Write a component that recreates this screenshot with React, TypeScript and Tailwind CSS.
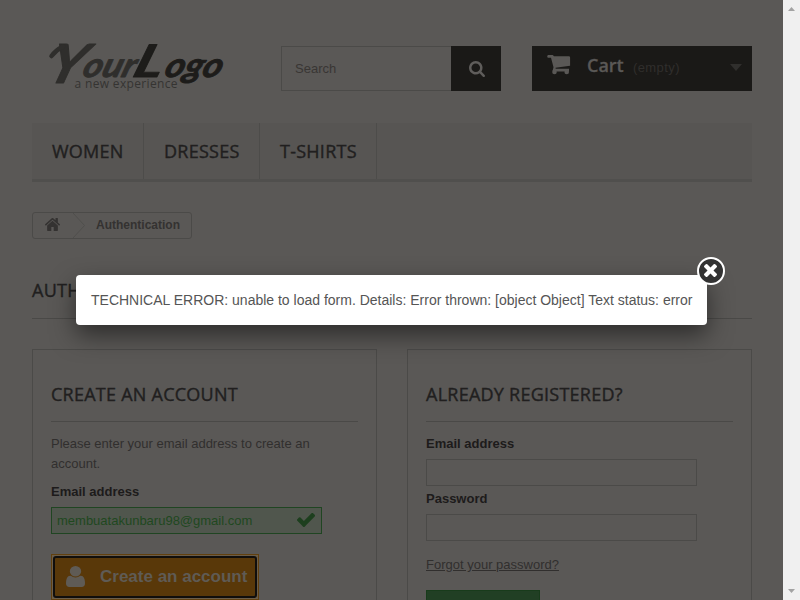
import React from "react";

const icons = {
  search:
    "M1216 832q0-185-131.5-316.5t-316.5-131.5-316.5 131.5-131.5 316.5 131.5 316.5 316.5 131.5 316.5-131.5 131.5-316.5zm512 832q0 52-38 90t-90 38q-54 0-90-38l-343-342q-179 124-399 124-143 0-273.5-55.5t-225-150-150-225-55.5-273.5 55.5-273.5 150-225 225-150 273.5-55.5 273.5 55.5 225 150 150 225 55.5 273.5q0 220-124 399l343 343q37 37 37 90z",
  home: "M1472 992v480q0 26-19 45t-45 19h-384v-384h-256v384h-384q-26 0-45-19t-19-45v-480q0-1 .5-3t.5-3l575-474 575 474q1 2 1 6zm223-69l-62 74q-8 9-21 11h-3q-13 0-21-7l-692-577-692 577q-12 8-24 7-13-2-21-11l-62-74q-8-10-7-23.5t11-21.5l719-599q32-26 76-26t76 26l244 204v-195q0-14 9-23t23-9h192q14 0 23 9t9 23v408l219 182q10 8 11 21.5t-7 23.5z",
  check:
    "M1671 566q0 40-28 68l-724 724-136 136q-28 28-68 28t-68-28l-136-136-362-362q-28-28-28-68t28-68l136-136q28-28 68-28t68 28l294 295 656-657q28-28 68-28t68 28l136 136q28 28 28 68z",
  times:
    "M1490 1322q0 40-28 68l-136 136q-28 28-68 28t-68-28l-294-294-294 294q-28 28-68 28t-68-28l-136-136q-28-28-28-68t28-68l294-294-294-294q-28-28-28-68t28-68l136-136q28-28 68-28t68 28l294 294 294-294q28-28 68-28t68 28l136 136q28 28 28 68t-28 68l-294 294 294 294q28 28 28 68z",
  user: "M1280 1399q0 109-62.5 187t-150.5 78h-854q-88 0-150.5-78t-62.5-187q0-85 8.5-160.5t31.5-152 58.5-131 94-89 134.5-34.5q131 128 313 128t313-128q76 0 134.5 34.5t94 89 58.5 131 31.5 152 8.5 160.5zm-256-887q0 159-112.5 271.5t-271.5 112.5-271.5-112.5-112.5-271.5 112.5-271.5 271.5-112.5 271.5 112.5 112.5 271.5z",
};

function Icon({ d, box, className }: { d: string; box: string; className: string }) {
  return (
    <svg viewBox={box} preserveAspectRatio="none" className={className} fill="currentColor">
      <path d={d} />
    </svg>
  );
}

function Logo() {
  return (
    <svg width="190" height="56" viewBox="0 0 190 56" className="ml-[14px] overflow-visible">
      <g fontFamily="Lato" fontStyle="italic" fontWeight="700" strokeWidth="0.9" strokeLinejoin="round" transform="translate(0 35) skewX(-18)">
        <g fill="#2f2e2c" stroke="#2f2e2c">
          <text x="0" y="6" fontSize="54" textLength="36" lengthAdjust="spacingAndGlyphs">Y</text>
          <text x="35" y="0" fontSize="34" textLength="52" lengthAdjust="spacingAndGlyphs">our</text>
        </g>
        <g fill="#1d1c1a" stroke="#1d1c1a">
          <text x="85" y="0" fontSize="45" textLength="29" lengthAdjust="spacingAndGlyphs">L</text>
          <text x="117" y="0" fontSize="34" textLength="57" lengthAdjust="spacingAndGlyphs">ogo</text>
        </g>
      </g>
      <path d="M5.500 14Q10 8 17 4.500" fill="none" stroke="#2f2e2c" strokeWidth="4.500" strokeLinecap="round" />
      <text x="28.500" y="46" fontFamily="'Open Sans'" fontSize="12" textLength="103" fill="#353432">a new experience</text>
    </svg>
  );
}

function Header() {
  return (
    <header className="flex h-[91px] pt-[46px]">
      <div className="-mt-[4px] w-[249px]">
        <Logo />
      </div>
      <div className="flex h-[45px] w-[220px]">
        <div className="h-[45px] w-[170px] border border-r-0 border-[#4b4a48] pl-[13px] text-[13px] leading-[43px] text-[#393634]">Search</div>
        <div className="flex h-[45px] w-[50px] items-center justify-center bg-[#1a1917] text-[#5f5d5b]">
          <Icon d={icons.search} box="64 128 1664 1664" className="ml-[1px] mt-[1px] size-[16px]" />
        </div>
      </div>
      <div className="ml-[31px] flex h-[45px] w-[220px] bg-[#1a1917] pl-[15px] font-['Open_Sans']">
        <svg width="24" height="22" viewBox="0 0 24 22" className="mt-[8px] text-[#5a5856]" fill="currentColor">
          <path d="M1 1h4.8l1.2 1.200h15.200q1 .4.9 1.400v8.200L8.500 13.800l.2 1h13.300v2.800H6.200l-.6-.9.9-3.500L4 3.800H1Q-.6 2.400 1 1z" />
          <circle cx="7.500" cy="18" r="2.300" />
          <circle cx="19.700" cy="18" r="2.300" />
        </svg>
        <span className="ml-[16px] mt-[8px] w-[37px] text-[18px] font-semibold leading-[22px] text-[#5a5856] [-webkit-text-stroke:0.3px_#5a5856]">Cart</span>
        <span className="ml-[9px] mt-[13px] font-['Liberation_Sans'] text-[13px] leading-[18px] tracking-[0.4px] text-[#302e2c]">(empty)</span>
        <svg width="12" height="7" viewBox="0 0 12 7" className="ml-auto mr-[10px] mt-[18px]" fill="#302f2d">
          <path d="M0 0h12L6 7z" />
        </svg>
      </div>
    </header>
  );
}

function Field({ label }: { label: string }) {
  return (
    <>
      <div className="h-[20px] text-[13px] font-bold leading-[20px] text-[#1d1b1b]">{label}</div>
      <div className="mb-[2px] mt-[5px] h-[27px] w-[271px] border border-[#4b4a48] pb-px" />
    </>
  );
}

function CardTitle({ children }: { children: React.ReactNode }) {
  return (
    <h3 className="mb-[12px] h-[39px] border-b border-[#4a4947] font-['Open_Sans'] text-[18px] leading-[23px] tracking-[0.25px] text-[#211f1f] [-webkit-text-stroke:0.4px_#211f1f]">
      {children}
    </h3>
  );
}

export default function App() {
  return (
    <div className="relative flex h-[600px] w-[800px] overflow-hidden bg-[#5a5856] font-['Liberation_Sans',sans-serif] text-[13px] text-[#312f2e]">
      <main className="h-[600px] w-[783px] overflow-hidden pl-[32px] pr-[31px]">
        <Header />
        <nav className="mt-[32px] flex h-[59px] border-b-[3px] border-[#504f4d] bg-[#575553] font-['Open_Sans'] text-[18px] leading-[56px] tracking-[0.25px] text-[#211f1f] [-webkit-text-stroke:0.4px_#211f1f]">
          <div className="w-[112px] border-r border-[#4d4c4a] pl-[20px]">WOMEN</div>
          <div className="w-[116px] border-r border-[#4d4c4a] pl-[20px]">DRESSES</div>
          <div className="w-[117px] border-r border-[#4d4c4a] pl-[20px]">T-SHIRTS</div>
        </nav>
        <div className="mt-[30px] flex h-[27px] w-[160px] items-center rounded-[3px] border border-[#4b4a48] pl-[12px] font-bold text-[#343231]">
          <Icon d={icons.home} box="89 250 1614 1286" className="-mt-[3px] h-[13px] w-[15px]" />
          <svg width="13" height="25" viewBox="0 0 13 25" className="ml-[13px]" fill="none" stroke="#504f4d">
            <path d="M0 0l11.500 12.500L0 25" />
          </svg>
          <span className="-mt-[2px] ml-[10px] text-[12px] leading-[24px]">Authentication</span>
        </div>
        <h1 className="mt-[40px] h-[40px] border-b border-[#4a4947] font-['Open_Sans'] text-[18px] leading-[23px] tracking-[0.25px] text-[#211f1f] [-webkit-text-stroke:0.4px_#211f1f]">AUTHENTICATION</h1>
        <div className="mt-[30px] flex gap-[30px]">
          <section className="h-[270px] w-[345px] border border-[#4b4a48] px-[18px] pt-[33px]">
            <CardTitle>CREATE AN ACCOUNT</CardTitle>
            <p className="h-[48px] leading-[20px]">
              Please enter your email address to create an
              <br />
              account.
            </p>
            <div className="font-bold leading-[20px] text-[#1d1b1b]">Email address</div>
            <div className="mt-[5px] flex h-[27px] w-[271px] items-center border border-[#204522] bg-[#50564d] pl-[5px] pr-[6px] text-[#20481f]">
              <span className="flex-1">membuatakunbaru98@gmail.com</span>
              <Icon d={icons.check} box="121 344 1550 1178" className="-mt-px h-[14px] w-[18px] text-[#1d3f1e]" />
            </div>
            <div className="mt-[20px] h-[46px] w-[208px] border border-[#61400f] bg-[#6b5d49] p-px">
              <div className="flex h-[42px] items-center rounded-[3px] border-2 border-[#100e0c] bg-[#593809] pl-[11px] text-[#5f5b55]">
                <Icon d={icons.user} box="0 128 1280 1536" className="-mt-[2px] h-[21px] w-[19px]" />
                <span className="-mt-px ml-[15px] text-[17px] font-bold">Create an account</span>
              </div>
            </div>
          </section>
          <section className="h-[270px] w-[345px] border border-[#4b4a48] px-[18px] pt-[33px]">
            <CardTitle>ALREADY REGISTERED?</CardTitle>
            <Field label="Email address" />
            <div className="mt-[3px]">
              <Field label="Password" />
            </div>
            <div className="mt-[14px] leading-[20px] underline">Forgot your password?</div>
            <div className="mt-[15px] h-[40px] w-[114px] border border-[#183b1b] bg-[#213f24]" />
          </section>
        </div>
      </main>
      <aside className="flex h-[600px] w-[17px] flex-col items-center justify-between bg-[#f0f0f0] py-[7px]">
        <svg width="7" height="4" viewBox="0 0 7 4" fill="#a3a3a3"><path d="M0 4h7L3.500 0z" /></svg>
        <svg width="7" height="4" viewBox="0 0 7 4" fill="#a3a3a3"><path d="M0 0h7L3.500 4z" /></svg>
      </aside>
      <div className="absolute left-[76px] top-[275px] h-[50px] w-[631px] rounded-[4px] bg-white pl-[15px] text-[14px] leading-[50px] text-[#555] shadow-[0_10px_25px_rgba(0,0,0,0.5)]">
        <span className="whitespace-nowrap">TECHNICAL ERROR: unable to load form. Details: Error thrown: [object Object] Text status: error</span>
        <div className="absolute -right-[18px] -top-[18px] flex size-[28px] items-center justify-center rounded-full border-2 border-white bg-[#333] text-white">
          <Icon d={icons.times} box="302 366 1188 1188" className="-ml-px -mt-px size-[13px]" />
        </div>
      </div>
    </div>
  );
}
